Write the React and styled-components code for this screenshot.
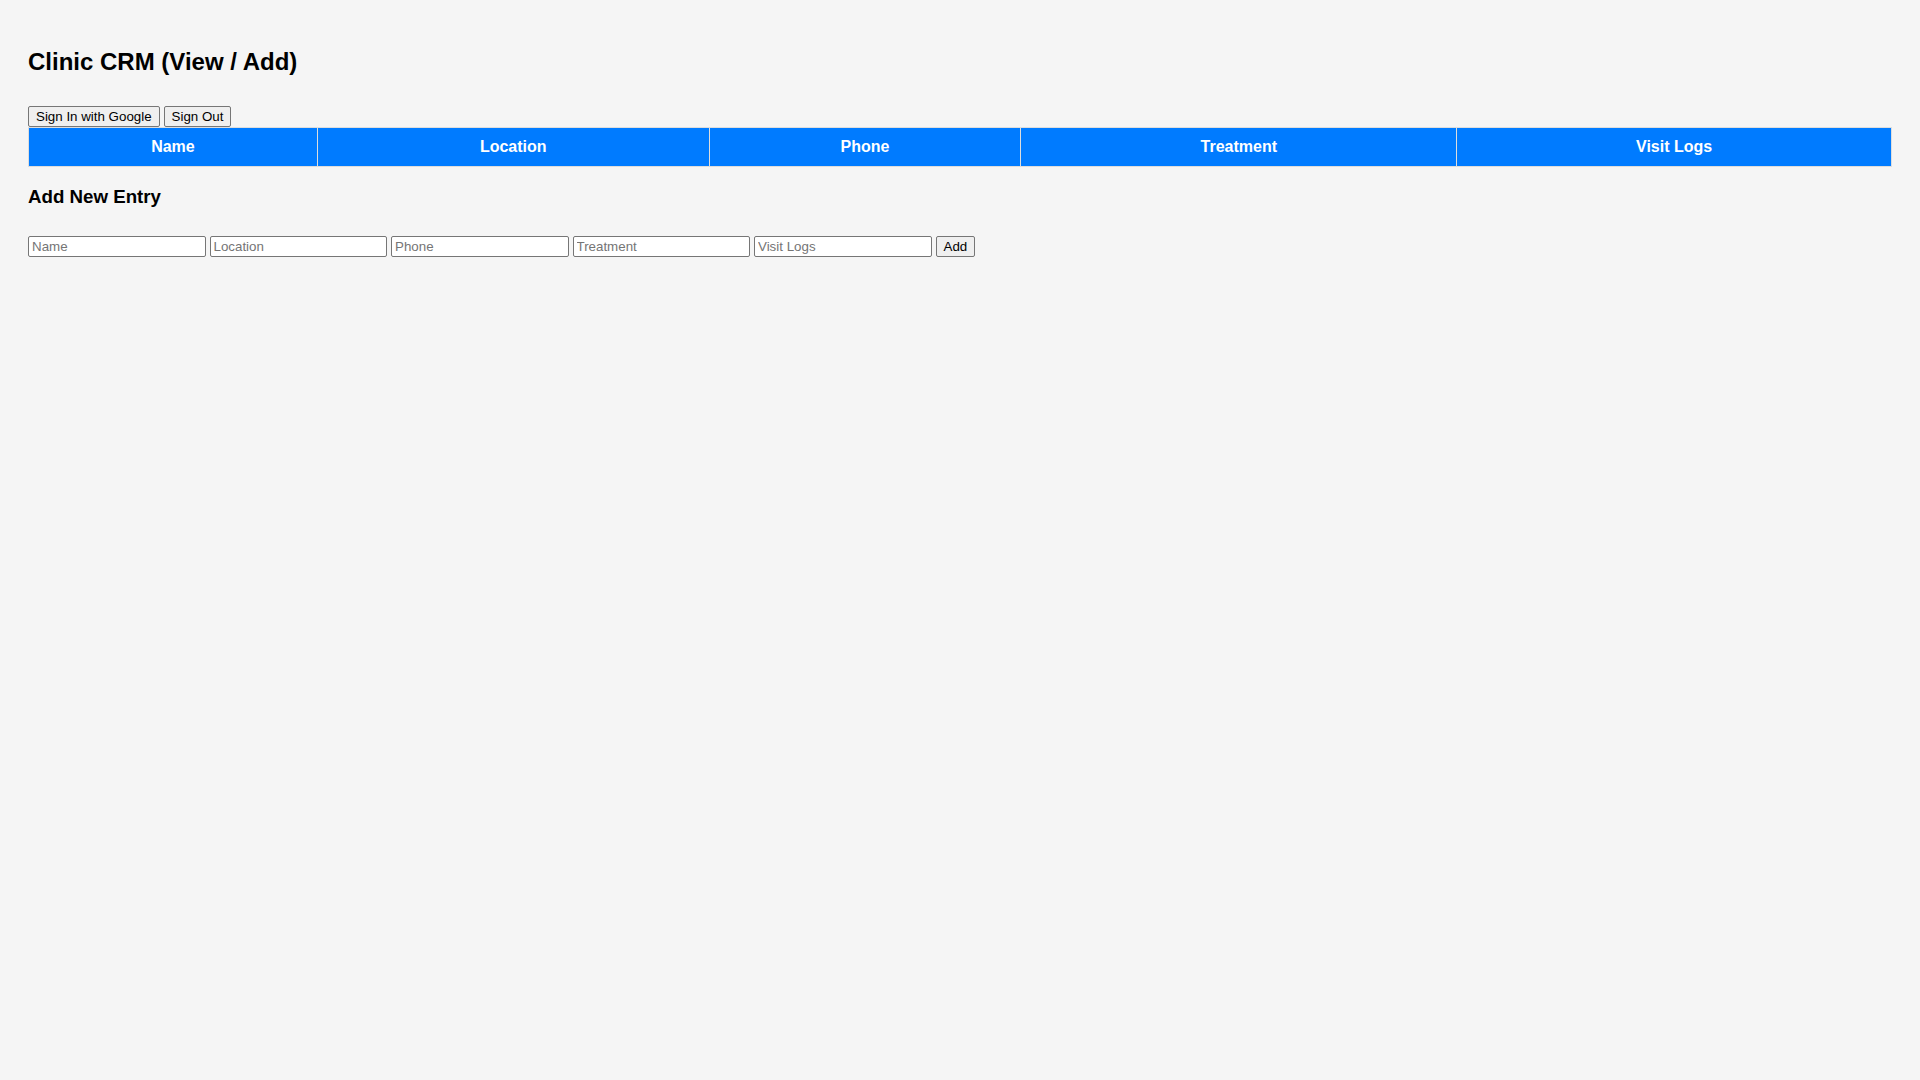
import React, { useState } from "react";
import styled, { createGlobalStyle } from "styled-components";

const GlobalStyle = createGlobalStyle`
  body {
    margin: 0;
    background: #f5f5f5;
    font-family: "Liberation Sans", Arial, sans-serif;
    color: #000;
  }
`;

const Container = styled.div`
  padding: 28px;
`;
const Title = styled.h2`
  font-size: 24px;
  font-weight: bold;
  margin: 20px 0 30px;
`;
const AuthBar = styled.div`
  display: flex;
  gap: 4px;
  height: 21px;
`;
const Button = styled.button`
  font-family: "Liberation Sans", Arial, sans-serif;
  font-size: 13.33px;
  height: 21px;
  padding: 1px 7px;
  background: #efefef;
  color: #000;
  border: 1px solid #767676;
  border-radius: 2px;
  line-height: 17px;
`;
const Table = styled.table`
  width: 100%;
  border-collapse: collapse;
  border: 1px solid #ddd;
`;
const Th = styled.th`
  width: ${(p) => p.$w}px;
  background: #007bff;
  color: #fff;
  font-size: 16px;
  font-weight: bold;
  padding: 10px;
  border: 1px solid #ddd;
  text-align: center;
`;
const SubTitle = styled.h3`
  font-size: 18.72px;
  margin: 19px 0 28px;
`;
const Form = styled.div`
  display: flex;
  gap: 4px;
`;
const Input = styled.input`
  box-sizing: border-box;
  width: 177.5px;
  height: 21px;
  padding: 1px 3px;
  font-family: "Liberation Sans", Arial, sans-serif;
  font-size: 13.33px;
  border: 1px solid #767676;
  border-radius: 2px;
  background: #fff;
  &::placeholder {
    color: #757575;
  }
`;

const columns = [
  { key: "name", label: "Name", w: 268 },
  { key: "location", label: "Location", w: 371 },
  { key: "phone", label: "Phone", w: 291 },
  { key: "treatment", label: "Treatment", w: 415 },
  { key: "visitLogs", label: "Visit Logs", w: 414 },
];

export default function App() {
  const [entry, setEntry] = useState({});
  const [rows, setRows] = useState([]);

  const add = () => {
    setRows([...rows, entry]);
    setEntry({});
  };

  return (
    <Container>
      <GlobalStyle />
      <Title>Clinic CRM (View / Add)</Title>
      <AuthBar>
        <Button>Sign In with Google</Button>
        <Button>Sign Out</Button>
      </AuthBar>
      <Table>
        <thead>
          <tr>
            {columns.map((c) => (
              <Th key={c.key} $w={c.w}>
                {c.label}
              </Th>
            ))}
          </tr>
        </thead>
        <tbody>
          {rows.map((r, i) => (
            <tr key={i}>
              {columns.map((c) => (
                <td key={c.key}>{r[c.key]}</td>
              ))}
            </tr>
          ))}
        </tbody>
      </Table>
      <SubTitle>Add New Entry</SubTitle>
      <Form>
        {columns.map((c) => (
          <Input
            key={c.key}
            placeholder={c.label}
            value={entry[c.key] || ""}
            onChange={(e) => setEntry({ ...entry, [c.key]: e.target.value })}
          />
        ))}
        <Button onClick={add}>Add</Button>
      </Form>
    </Container>
  );
}
